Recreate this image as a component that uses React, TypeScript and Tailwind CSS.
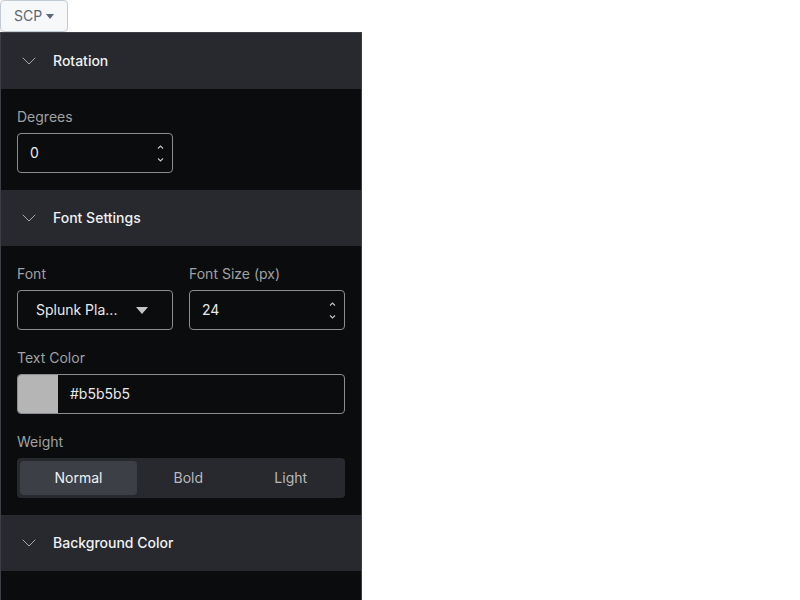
import { ChevronDown } from "lucide-react";

const font = { fontFamily: "Inter, 'Noto Sans', sans-serif" };

function SectionHeader({ title }: { title: string }) {
  return (
    <div className="flex h-14 items-center bg-[#27292e] pl-[16px]">
      <ChevronDown size={24} strokeWidth={1} className="text-[#a6a8ab]" />
      <span className="ml-[12px] text-sm font-medium text-[#f0f1f2]">{title}</span>
    </div>
  );
}

function Label({ children }: { children: string }) {
  return <div className="mb-2 text-sm leading-4 text-[#9fa1a4]">{children}</div>;
}

function Spinner() {
  return (
    <div className="flex flex-col items-center gap-[9px] text-[#c4c5c7]">
      <svg width="7" height="4" viewBox="0 0 7 4" fill="none" stroke="currentColor" strokeWidth="1.1">
        <path d="M1 3.5L3.5 1 6 3.5" />
      </svg>
      <svg width="7" height="4" viewBox="0 0 7 4" fill="none" stroke="currentColor" strokeWidth="1.1">
        <path d="M1 .5L3.5 3 6 .5" />
      </svg>
    </div>
  );
}

function NumberInput({ value }: { value: string }) {
  return (
    <div className="flex h-10 w-[156px] items-center justify-between rounded border border-[#8b8d91] pl-[12px] pr-[8px] text-sm text-[#e8e9ea]">
      <span>{value}</span>
      <Spinner />
    </div>
  );
}

export default function App() {
  return (
    <div className="min-h-[600px] bg-white" style={font}>
      <button className="flex h-8 w-[68px] items-center justify-center gap-1 rounded border border-[#c3cbd4] bg-[#f7f8fa] text-sm text-[#5c6773]">
        SCP
        <svg width="8" height="5" viewBox="0 0 8 5">
          <path d="M0 0h8L4 5z" fill="currentColor" />
        </svg>
      </button>
      <div className="h-[568px] w-[362px] border-x border-t border-[#3c3f45] bg-[#0b0c0e]">
        <SectionHeader title="Rotation" />
        <div className="px-4 pb-[17px] pt-[20px]">
          <Label>Degrees</Label>
          <NumberInput value="0" />
        </div>

        <SectionHeader title="Font Settings" />
        <div className="px-4 pb-[17px] pt-[20px]">
          <div className="flex gap-4">
            <div>
              <Label>Font</Label>
              <div className="flex h-10 w-[156px] items-center rounded border border-[#8b8d91] pl-[18px] text-sm text-[#e8e9ea]">
                <span>Splunk Pla...</span>
                <svg width="12" height="7" viewBox="0 0 12 7" className="ml-[19px] text-[#c4c5c7]">
                  <path d="M0 0h12L6 7z" fill="currentColor" />
                </svg>
              </div>
            </div>
            <div>
              <Label>Font Size (px)</Label>
              <NumberInput value="24" />
            </div>
          </div>

          <div className="mt-[20px]">
            <Label>Text Color</Label>
            <div className="flex h-10 w-[328px] overflow-hidden rounded border border-[#8b8d91]">
              <div className="w-10 bg-[#b5b5b5]" />
              <div className="flex items-center pl-[12px] text-sm text-[#e8e9ea]">#b5b5b5</div>
            </div>
          </div>

          <div className="mt-[20px]">
            <Label>Weight</Label>
            <div className="flex h-10 w-[328px] items-center rounded bg-[#27292e] p-[3px] text-sm">
              <div className="flex h-[34px] w-[117px] items-center justify-center rounded bg-[#3c3f45] text-[#f0f1f2]">
                Normal
              </div>
              <div className="flex flex-1 items-center justify-center text-[#b8babd]">Bold</div>
              <div className="flex flex-1 items-center justify-center text-[#b8babd]">Light</div>
            </div>
          </div>
        </div>

        <SectionHeader title="Background Color" />
      </div>
    </div>
  );
}
